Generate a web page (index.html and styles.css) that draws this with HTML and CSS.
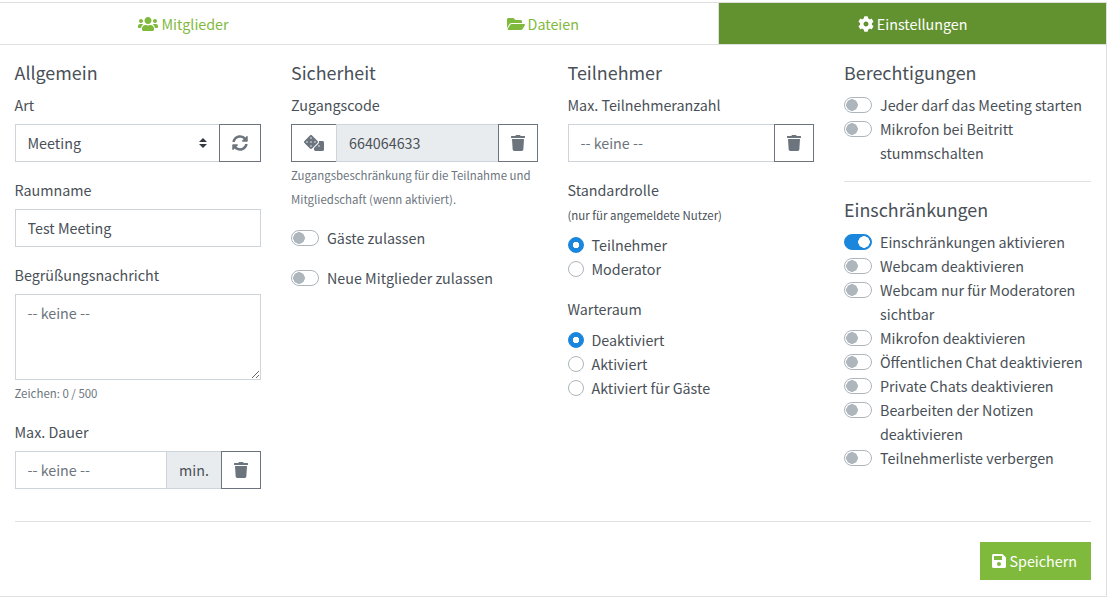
FILE: index.html
```html
<!DOCTYPE html>
<html lang="de">
<head>
    <meta charset="UTF-8">
    <meta name="viewport" content="width=device-width, initial-scale=1.0">
    <title>Einstellungen</title>
    <link rel="stylesheet" href="styles.css">
</head>
<body>
    <svg class="defs" aria-hidden="true">
        <symbol id="i-users" viewBox="0 0 640 512"><path d="M96 224c35.3 0 64-28.7 64-64s-28.7-64-64-64-64 28.7-64 64 28.7 64 64 64zm448 0c35.3 0 64-28.7 64-64s-28.7-64-64-64-64 28.7-64 64 28.7 64 64 64zm32 32h-64c-17.6 0-33.5 7.1-45.1 18.6 40.3 22.1 68.9 62 75.1 109.4h66c17.7 0 32-14.3 32-32v-32c0-35.3-28.7-64-64-64zm-256 0c61.9 0 112-50.1 112-112S381.9 32 320 32 208 82.1 208 144s50.1 112 112 112zm76.8 32h-8.3c-20.8 10-43.9 16-68.5 16s-47.6-6-68.5-16h-8.3C179.6 288 128 339.6 128 403.2V432c0 26.5 21.5 48 48 48h288c26.5 0 48-21.5 48-48v-28.8c0-63.6-51.6-115.2-115.2-115.2zm-223.7-13.4C161.5 263.1 145.6 256 128 256H64c-35.3 0-64 28.7-64 64v32c0 17.7 14.3 32 32 32h65.9c6.3-47.4 34.9-87.3 75.2-109.4z"/></symbol>
        <symbol id="i-folder" viewBox="0 0 576 512"><path d="M572.694 292.093L500.27 416.248A63.997 63.997 0 0 1 444.989 448H45.025c-18.523 0-30.064-20.093-20.731-36.093l72.424-124.155A64 64 0 0 1 152 256h399.964c18.523 0 30.064 20.093 20.73 36.093zM152 224h328v-48c0-26.51-21.49-48-48-48H272l-64-64H48C21.49 64 0 85.49 0 112v278.046l69.077-118.418C86.214 242.25 117.989 224 152 224z"/></symbol>
        <symbol id="i-cog" viewBox="0 0 512 512"><path d="M487.4 315.7l-42.6-24.6c4.3-23.2 4.3-47 0-70.2l42.6-24.6c4.9-2.8 7.1-8.6 5.5-14-11.1-35.6-30-67.8-54.7-94.6-3.8-4.1-10-5.1-14.8-2.3L380.8 110c-17.9-15.4-38.5-27.3-60.8-35.1V25.8c0-5.6-3.9-10.5-9.4-11.7-36.7-8.2-74.3-7.8-109.2 0-5.5 1.2-9.4 6.1-9.4 11.7V75c-22.2 7.9-42.8 19.8-60.8 35.1L88.7 85.5c-4.9-2.8-11-1.9-14.8 2.3-24.7 26.7-43.6 58.9-54.7 94.6-1.7 5.4.6 11.2 5.5 14L67.3 221c-4.3 23.2-4.3 47 0 70.2l-42.6 24.6c-4.9 2.8-7.1 8.6-5.5 14 11.1 35.6 30 67.8 54.7 94.6 3.8 4.1 10 5.1 14.8 2.3l42.6-24.6c17.9 15.4 38.5 27.3 60.8 35.1v49.2c0 5.6 3.9 10.5 9.4 11.7 36.7 8.2 74.3 7.8 109.2 0 5.5-1.2 9.4-6.1 9.4-11.7v-49.2c22.2-7.9 42.8-19.8 60.8-35.1l42.6 24.6c4.9 2.8 11 1.9 14.8-2.3 24.7-26.7 43.6-58.9 54.7-94.6 1.5-5.5-.7-11.3-5.6-14.1zM256 336c-44.1 0-80-35.9-80-80s35.9-80 80-80 80 35.9 80 80-35.9 80-80 80z"/></symbol>
        <symbol id="i-sync" viewBox="0 0 512 512"><path d="M370.72 133.28C339.458 104.008 298.888 87.962 255.848 88c-77.458.068-144.328 53.178-162.791 126.85-1.344 5.363-6.122 9.15-11.651 9.15H24.103c-7.498 0-13.194-6.807-11.807-14.176C33.933 94.924 134.813 8 256 8c66.448 0 126.791 26.136 171.315 68.685L463.03 40.97C478.149 25.851 504 36.559 504 57.941V192c0 13.255-10.745 24-24 24H345.941c-21.382 0-32.09-25.851-16.971-40.971l41.75-41.749zM32 296h134.059c21.382 0 32.09 25.851 16.971 40.971l-41.75 41.75c31.262 29.273 71.835 45.319 114.876 45.28 77.418-.07 144.315-53.144 162.787-126.849 1.344-5.363 6.122-9.15 11.651-9.15h57.304c7.498 0 13.194 6.807 11.807 14.176C478.067 417.076 377.187 504 256 504c-66.448 0-126.791-26.136-171.315-68.685L48.97 471.03C33.851 486.149 8 475.441 8 454.059V320c0-13.255 10.745-24 24-24z"/></symbol>
        <symbol id="i-dice" viewBox="0 0 640 512"><path d="M592 192H473.26c12.69 29.59 7.12 65.2-17 89.32L320 417.58V464c0 26.51 21.49 48 48 48h224c26.51 0 48-21.49 48-48V240c0-26.51-21.49-48-48-48zM480 376c-13.25 0-24-10.75-24-24 0-13.26 10.75-24 24-24s24 10.74 24 24c0 13.25-10.75 24-24 24zm-46.37-186.7L258.7 14.37c-19.16-19.16-50.23-19.16-69.39 0L14.37 189.3c-19.16 19.16-19.16 50.23 0 69.39L189.3 433.63c19.16 19.16 50.23 19.16 69.39 0L433.63 258.7c19.16-19.17 19.16-50.24 0-69.4zM96 248c-13.25 0-24-10.75-24-24 0-13.26 10.75-24 24-24s24 10.74 24 24c0 13.25-10.75 24-24 24zm128 128c-13.25 0-24-10.75-24-24 0-13.26 10.75-24 24-24s24 10.74 24 24c0 13.25-10.75 24-24 24zm0-128c-13.25 0-24-10.75-24-24 0-13.26 10.75-24 24-24s24 10.74 24 24c0 13.25-10.75 24-24 24zm0-128c-13.25 0-24-10.75-24-24 0-13.26 10.75-24 24-24s24 10.74 24 24c0 13.25-10.75 24-24 24zm128 128c-13.25 0-24-10.75-24-24 0-13.26 10.75-24 24-24s24 10.74 24 24c0 13.25-10.75 24-24 24z"/></symbol>
        <symbol id="i-trash" viewBox="0 0 448 512"><path d="M432 32H312l-9.4-18.7A24 24 0 0 0 281.1 0H166.8a23.72 23.72 0 0 0-21.4 13.3L136 32H16A16 16 0 0 0 0 48v32a16 16 0 0 0 16 16h416a16 16 0 0 0 16-16V48a16 16 0 0 0-16-16zM53.2 467a48 48 0 0 0 47.9 45h245.8a48 48 0 0 0 47.9-45L416 128H32z"/></symbol>
        <symbol id="i-save" viewBox="0 0 448 512"><path d="M433.941 129.941l-83.882-83.882A48 48 0 0 0 316.118 32H48C21.49 32 0 53.49 0 80v352c0 26.51 21.49 48 48 48h352c26.51 0 48-21.49 48-48V163.882a48 48 0 0 0-14.059-33.941zM224 416c-35.346 0-64-28.654-64-64 0-35.346 28.654-64 64-64s64 28.654 64 64c0 35.346-28.654 64-64 64zm96-304.52V212c0 6.627-5.373 12-12 12H76c-6.627 0-12-5.373-12-12V108c0-6.627 5.373-12 12-12h228.52c3.183 0 6.235 1.264 8.485 3.515l3.48 3.48A11.996 11.996 0 0 1 320 111.48z"/></symbol>
    </svg>

    <div class="card">
        <!-- Tabs -->
        <nav class="tabs">
            <a class="tab tab-narrow" href="#"><svg class="icon icon-wide"><use href="#i-users"/></svg>Mitglieder</a>
            <a class="tab tab-narrow" href="#"><svg class="icon icon-folder"><use href="#i-folder"/></svg>Dateien</a>
            <a class="tab active" href="#"><svg class="icon"><use href="#i-cog"/></svg>Einstellungen</a>
        </nav>

        <div class="content">
            <div class="columns">
                <!-- Allgemein -->
                <section>
                    <h5>Allgemein</h5>
                    <div class="group">
                        <label>Art</label>
                        <div class="input-group">
                            <select class="field select"><option>Meeting</option></select>
                            <button class="btn-icon"><svg class="icon"><use href="#i-sync"/></svg></button>
                        </div>
                    </div>
                    <div class="group">
                        <label>Raumname</label>
                        <input class="field" type="text" value="Test Meeting">
                    </div>
                    <div class="group">
                        <label>Begrüßungsnachricht</label>
                        <textarea class="field area" placeholder="-- keine --"></textarea>
                        <small class="hint">Zeichen: 0 / 500</small>
                    </div>
                    <div class="group">
                        <label>Max. Dauer</label>
                        <div class="input-group">
                            <input class="field" type="text" placeholder="-- keine --">
                            <span class="addon">min.</span>
                            <button class="btn-icon"><svg class="icon icon-trash"><use href="#i-trash"/></svg></button>
                        </div>
                    </div>
                </section>

                <!-- Sicherheit -->
                <section>
                    <h5>Sicherheit</h5>
                    <div class="group">
                        <label>Zugangscode</label>
                        <div class="input-group">
                            <button class="btn-icon btn-dice"><svg class="icon icon-dice"><use href="#i-dice"/></svg></button>
                            <input class="field code" type="text" value="664064633" readonly>
                            <button class="btn-icon"><svg class="icon icon-trash"><use href="#i-trash"/></svg></button>
                        </div>
                        <small class="hint">Zugangsbeschränkung für die Teilnahme und Mitgliedschaft (wenn aktiviert).</small>
                    </div>
                    <label class="switch"><input type="checkbox"><span>Gäste zulassen</span></label>
                    <label class="switch spaced"><input type="checkbox"><span>Neue Mitglieder zulassen</span></label>
                </section>

                <!-- Teilnehmer -->
                <section>
                    <h5>Teilnehmer</h5>
                    <div class="group">
                        <label>Max. Teilnehmeranzahl</label>
                        <div class="input-group">
                            <input class="field" type="text" placeholder="-- keine --">
                            <button class="btn-icon"><svg class="icon icon-trash"><use href="#i-trash"/></svg></button>
                        </div>
                    </div>
                    <div class="group">
                        <label class="tight">Standardrolle</label>
                        <small class="note">(nur für angemeldete Nutzer)</small>
                        <label class="radio"><input type="radio" name="rolle" checked><span>Teilnehmer</span></label>
                        <label class="radio"><input type="radio" name="rolle"><span>Moderator</span></label>
                    </div>
                    <div class="group">
                        <label>Warteraum</label>
                        <label class="radio"><input type="radio" name="warte" checked><span>Deaktiviert</span></label>
                        <label class="radio"><input type="radio" name="warte"><span>Aktiviert</span></label>
                        <label class="radio"><input type="radio" name="warte"><span>Aktiviert für Gäste</span></label>
                    </div>
                </section>

                <!-- Berechtigungen -->
                <section>
                    <h5>Berechtigungen</h5>
                    <label class="switch"><input type="checkbox"><span>Jeder darf das Meeting starten</span></label>
                    <label class="switch"><input type="checkbox"><span>Mikrofon bei Beitritt stummschalten</span></label>
                    <hr class="line">
                    <h5>Einschränkungen</h5>
                    <label class="switch"><input type="checkbox" checked><span>Einschränkungen aktivieren</span></label>
                    <label class="switch"><input type="checkbox"><span>Webcam deaktivieren</span></label>
                    <label class="switch"><input type="checkbox"><span>Webcam nur für Moderatoren sichtbar</span></label>
                    <label class="switch"><input type="checkbox"><span>Mikrofon deaktivieren</span></label>
                    <label class="switch"><input type="checkbox"><span>Öffentlichen Chat deaktivieren</span></label>
                    <label class="switch"><input type="checkbox"><span>Private Chats deaktivieren</span></label>
                    <label class="switch"><input type="checkbox"><span>Bearbeiten der Notizen deaktivieren</span></label>
                    <label class="switch"><input type="checkbox"><span>Teilnehmerliste verbergen</span></label>
                </section>
            </div>

            <hr class="line footer-line">
            <div class="footer">
                <button class="save"><svg class="icon icon-trash"><use href="#i-save"/></svg>Speichern</button>
            </div>
        </div>
    </div>
</body>
</html>
```

FILE: styles.css
```css
*{
    box-sizing: border-box;
}
body{
    margin: 0;
    padding-top: 2px;
    color: #495057;
    background-color: white;
    font-family: "Noto Sans CJK SC", "Source Sans Pro", "Noto Sans", sans-serif;
    font-size: 14.32px;
    line-height: 24px;
}
.defs{
    display: none;
}

/* Rahmen */
.card{
    width: 1107px;
    height: 595px;
    border-top: 1px solid #dfdfdf;
    border-right: 1px solid #dfdfdf;
    border-bottom: 1px solid #dfdfdf;
}

/* Tabs */
.tabs{
    display: flex;
    height: 42px;
    border-bottom: 1px solid #dfdfdf;
}
.tab{
    flex: 1 1 auto;
    display: flex;
    align-items: center;
    justify-content: center;
    gap: 3px;
    color: #7fba3d;
    text-decoration: none;
}
.tab-narrow{
    padding-right: 1px;
}
.tab + .tab{
    border-right: 1px solid #dfdfdf;
}
.tab.active{
    color: white;
    background-color: #62922f;
    border-right: 0;
}

.icon{
    width: 16px;
    height: 16px;
    fill: currentColor;
    flex-shrink: 0;
}
.icon-wide{
    width: 20px;
}
.icon-folder{
    width: 18px;
}
.icon-dice{
    width: 20px;
}
.icon-trash{
    width: 14px;
}

.content{
    padding: 15px 15.5px 0 14.5px;
}
.columns{
    display: grid;
    grid-template-columns: repeat(4, 1fr);
    column-gap: 30px;
    height: 461px;
}

h5{
    margin: 0 0 9px;
    font-size: 17.9px;
    font-weight: 400;
    line-height: 24px;
}
.group{
    margin-bottom: 16px;
}
label{
    display: block;
    margin-bottom: 7px;
}
label.tight{
    margin-bottom: 0;
}

/* Eingabefelder */
.field{
    display: block;
    width: 100%;
    height: 38px;
    padding: 6px 12px;
    font: inherit;
    color: #495057;
    background-color: white;
    border: 1px solid #ced4da;
    border-radius: 0;
    outline: none;
}
input.field{
    padding: 5px 12px 7px;
}
.field::placeholder{
    color: #6c757d;
    opacity: 1;
}
.select{
    appearance: none;
    background-image: url("data:image/svg+xml,%3csvg xmlns='http://www.w3.org/2000/svg' width='4' height='5' viewBox='0 0 4 5'%3e%3cpath fill='%23343a40' d='M2 0L0 2h4zm0 5L0 3h4z'/%3e%3c/svg%3e");
    background-repeat: no-repeat;
    background-position: right 12px center;
    background-size: 8px 10px;
}
.area{
    height: 86px;
    resize: vertical;
}
.code{
    background-color: #e9ecef;
}
.input-group{
    display: flex;
}
.input-group .field{
    flex: 1 1 0;
    min-width: 0;
}
.input-group .field + .btn-icon{
    margin-left: -1px;
}
.addon{
    flex: none;
    padding: 6px 12px;
    background-color: #e9ecef;
    border: 1px solid #ced4da;
    border-left: 0;
    border-right: 0;
}
.btn-icon{
    flex: none;
    height: 38px;
    padding: 0 12px;
    display: flex;
    align-items: center;
    justify-content: center;
    color: #6c757d;
    background-color: white;
    border: 1px solid #6c757d;
    border-radius: 0;
    cursor: pointer;
}
.btn-dice{
    margin-right: -1px;
}
.hint{
    display: block;
    padding-top: 1px;
    margin-bottom: -1px;
    font-size: 11.45px;
    color: #6c757d;
}
.note{
    display: block;
    padding-top: 1px;
    margin-bottom: 6px;
    font-size: 11.45px;
}

/* Schalter */
.switch{
    display: flex;
    gap: 8px;
    margin-bottom: 0;
}
.switch.spaced{
    margin-top: 16px;
}
.switch input{
    appearance: none;
    flex: none;
    width: 28px;
    height: 16px;
    margin: 4px 0 0;
    border: 1px solid #adb5bd;
    border-radius: 8px;
    background: radial-gradient(circle 6px at 7px 7px, #adb5bd 5.5px, white 6px);
}
.switch input:checked{
    border-color: #1b87dc;
    background: radial-gradient(circle 6px at 19px 7px, white 5.5px, #1b87dc 6px);
}
.switch span{
    flex: 1;
}

/* Radio */
.radio{
    display: flex;
    gap: 8px;
    margin-bottom: 0;
}
.radio input{
    appearance: none;
    flex: none;
    width: 16px;
    height: 16px;
    margin: 4px 0 0;
    border: 1px solid #adb5bd;
    border-radius: 50%;
    background-color: white;
}
.radio input:checked{
    border-color: #1b87dc;
    background: radial-gradient(circle 3.5px at center, white 3px, #1b87dc 3.5px);
}

.line{
    margin: 16px 0 15px;
    border: 0;
    border-top: 1px solid #e2e2e2;
}
.footer-line{
    margin: 0 0 20px;
}
.footer{
    display: flex;
    justify-content: flex-end;
}
.save{
    display: flex;
    align-items: center;
    gap: 4px;
    height: 38px;
    padding: 0 13.5px 0 12px;
    font: inherit;
    color: white;
    background-color: #7fba3d;
    border: 0;
    border-radius: 0;
    cursor: pointer;
}
```
